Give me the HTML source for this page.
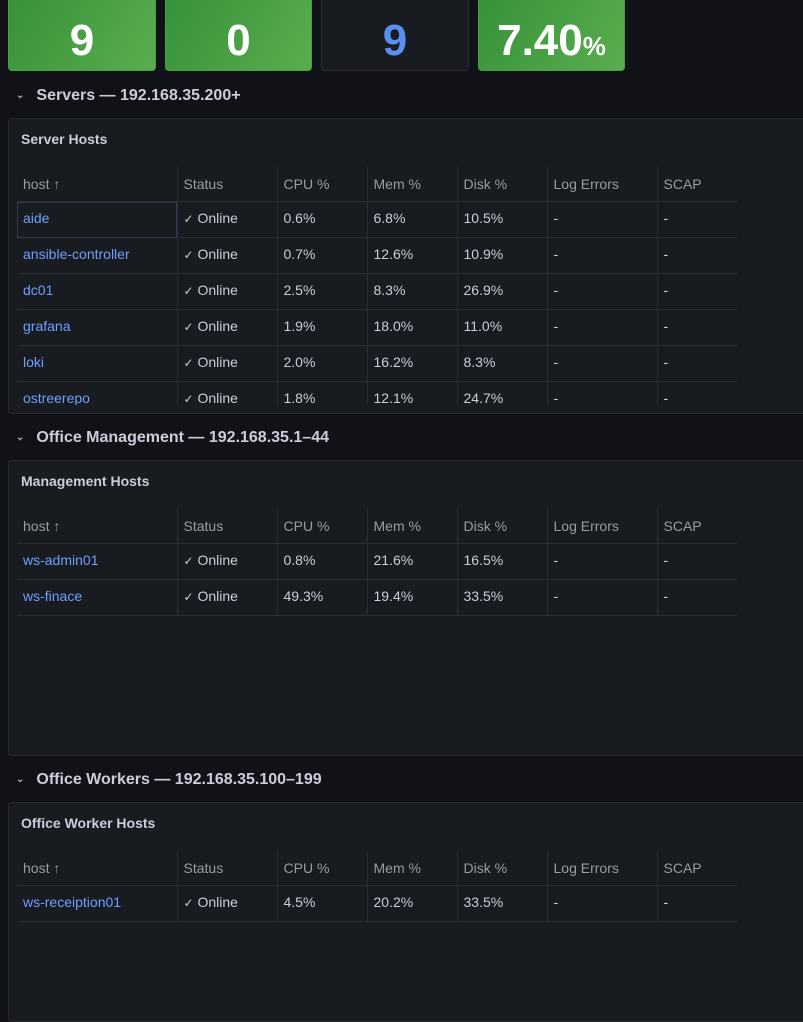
<!DOCTYPE html><html><head><style>
body{margin:0;width:803px;height:1001px;overflow:hidden;background:#111217;font-family:"Liberation Sans",sans-serif;position:relative;color:#ccccdc}
.stat{position:absolute;top:-4px;height:75px;border-radius:4px;border:1px solid #2b2e35;box-sizing:border-box;color:#fff;font-size:44px;font-weight:bold;text-align:center;line-height:88px}
.g{background:linear-gradient(120deg,#37923a,#5aad4e);border-color:#4a9e45}
.row-h{position:absolute;left:16px;font-size:16px;color:#ccccdc;font-weight:bold}
.row-h span{font-size:10px;margin-right:12px;color:#aaa;position:relative;top:-2px}
.panel{position:absolute;left:8px;width:810px;background:#181b1f;border:1px solid #25282e;border-radius:3px;box-sizing:border-box;overflow:hidden}
.ptitle{position:absolute;left:12px;top:12px;font-size:14px;font-weight:bold;color:#ccccdc}
table{position:absolute;left:8px;border-collapse:collapse;font-size:14px}
td,th{padding:0 6px;text-align:left;font-weight:normal;border-bottom:1px solid #2a2d33;white-space:nowrap}
th{color:#9a9ba3;border-left:1px solid #2a2d33;height:34px}
th:first-child,td:first-child{border-left:none}
td{border-left:1px solid #2a2d33;color:#ccccdc;height:32px;padding-bottom:3px}
td a{color:#6e9fff}
.ck{font-size:12px}
</style></head><body>
<div class="stat g" style="left:8px;width:148px">9</div>
<div class="stat g" style="left:165px;width:147px">0</div>
<div class="stat" style="left:321px;width:148px;background:#181b1f;color:#5a8ff0">9</div>
<div class="stat g" style="left:478px;width:147px">7.40<span style="font-size:26px">%</span></div>

<div class="row-h" style="top:87px"><span>⌄</span>Servers — 192.168.35.200+</div>
<div class="panel" style="top:118px;height:296px">
<div class="ptitle">Server Hosts</div>
<div style="position:absolute;left:0;top:48px;height:238px;width:800px;overflow:hidden">
<table style="top:0">
<colgroup><col style="width:160px"><col style="width:100px"><col style="width:90px"><col style="width:90px"><col style="width:90px"><col style="width:110px"><col style="width:80px"></colgroup>
<tr><th>host ↑</th><th>Status</th><th>CPU %</th><th>Mem %</th><th>Disk %</th><th>Log Errors</th><th>SCAP</th></tr>
<tr><td style="outline:1px solid #2e3a52;outline-offset:-1px"><a>aide</a></td><td><span class="ck">✓</span> Online</td><td>0.6%</td><td>6.8%</td><td>10.5%</td><td>-</td><td>-</td></tr>
<tr><td><a>ansible-controller</a></td><td><span class="ck">✓</span> Online</td><td>0.7%</td><td>12.6%</td><td>10.9%</td><td>-</td><td>-</td></tr>
<tr><td><a>dc01</a></td><td><span class="ck">✓</span> Online</td><td>2.5%</td><td>8.3%</td><td>26.9%</td><td>-</td><td>-</td></tr>
<tr><td><a>grafana</a></td><td><span class="ck">✓</span> Online</td><td>1.9%</td><td>18.0%</td><td>11.0%</td><td>-</td><td>-</td></tr>
<tr><td><a>loki</a></td><td><span class="ck">✓</span> Online</td><td>2.0%</td><td>16.2%</td><td>8.3%</td><td>-</td><td>-</td></tr>
<tr><td><a>ostreerepo</a></td><td><span class="ck">✓</span> Online</td><td>1.8%</td><td>12.1%</td><td>24.7%</td><td>-</td><td>-</td></tr>
</table></div></div>

<div class="row-h" style="top:429px"><span>⌄</span>Office Management — 192.168.35.1–44</div>
<div class="panel" style="top:460px;height:296px">
<div class="ptitle">Management Hosts</div>
<table style="top:48px">
<colgroup><col style="width:160px"><col style="width:100px"><col style="width:90px"><col style="width:90px"><col style="width:90px"><col style="width:110px"><col style="width:80px"></colgroup>
<tr><th>host ↑</th><th>Status</th><th>CPU %</th><th>Mem %</th><th>Disk %</th><th>Log Errors</th><th>SCAP</th></tr>
<tr><td><a>ws-admin01</a></td><td><span class="ck">✓</span> Online</td><td>0.8%</td><td>21.6%</td><td>16.5%</td><td>-</td><td>-</td></tr>
<tr><td><a>ws-finace</a></td><td><span class="ck">✓</span> Online</td><td>49.3%</td><td>19.4%</td><td>33.5%</td><td>-</td><td>-</td></tr>
</table></div>

<div class="row-h" style="top:771px"><span>⌄</span>Office Workers — 192.168.35.100–199</div>
<div class="panel" style="top:802px;height:220px">
<div class="ptitle">Office Worker Hosts</div>
<table style="top:48px">
<colgroup><col style="width:160px"><col style="width:100px"><col style="width:90px"><col style="width:90px"><col style="width:90px"><col style="width:110px"><col style="width:80px"></colgroup>
<tr><th>host ↑</th><th>Status</th><th>CPU %</th><th>Mem %</th><th>Disk %</th><th>Log Errors</th><th>SCAP</th></tr>
<tr><td><a>ws-receiption01</a></td><td><span class="ck">✓</span> Online</td><td>4.5%</td><td>20.2%</td><td>33.5%</td><td>-</td><td>-</td></tr>
</table></div>
</body></html>
